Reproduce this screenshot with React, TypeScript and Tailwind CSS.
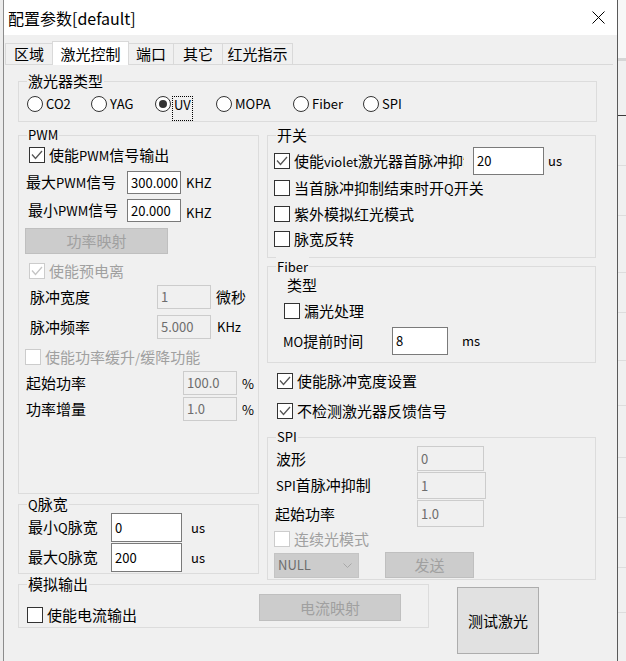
import React from 'react';

// Latin runs inside Chinese labels render a little smaller, like the UI font does
const Mixed = ({ text }: { text: string }) => (
  <>
    {text.split(/([\x20-\x7e]+)/).map((s, i) =>
      /[\x20-\x7e]/.test(s) ? (
        <span key={i} className="text-[13px]">
          {s}
        </span>
      ) : (
        <React.Fragment key={i}>{s}</React.Fragment>
      )
    )}
  </>
);

type CheckProps = { label: string; checked?: boolean; disabled?: boolean };

const Check = ({ label, checked, disabled }: CheckProps) => (
  <div className="flex items-center h-[16px]">
    <span
      className={`relative shrink-0 w-[16px] h-[16px] bg-white border ${
        disabled ? 'border-[#cccccc]' : 'border-[#333333]'
      }`}
    >
      {checked && (
        <svg viewBox="0 0 14 14" className="absolute inset-0 w-[14px] h-[14px]">
          <path
            d="M2 6.5 L5.5 10.5 L12 3"
            fill="none"
            stroke={disabled ? '#c4c4c4' : '#555555'}
            strokeWidth="1.3"
          />
        </svg>
      )}
    </span>
    <span
      className={`ml-[4px] text-[15px] leading-[18px] whitespace-nowrap ${
        disabled ? 'text-[#a0a0a0]' : 'text-black'
      }`}
    >
      <Mixed text={label} />
    </span>
  </div>
);

type RadioProps = { label: string; checked?: boolean; focus?: boolean; className?: string };

const Radio = ({ label, checked, focus, className }: RadioProps) => (
  <div className={`flex items-start ${className ?? ''}`}>
    <span className="shrink-0 w-[16px] h-[16px] rounded-full bg-white border border-[#333333] flex items-center justify-center">
      {checked && <span className="w-[8px] h-[8px] rounded-full bg-[#333333]" />}
    </span>
    {focus ? (
      <span className="ml-[1px] h-[25px] px-[1px] border border-dotted border-black text-[13px] leading-[15px] text-black">
        {label}
      </span>
    ) : (
      <span className="ml-[3px] text-[13px] leading-[16px] text-black">{label}</span>
    )}
  </div>
);

type FieldProps = { value: string; className: string; disabled?: boolean };

const Field = ({ value, className, disabled }: FieldProps) => (
  <div
    className={`shrink-0 flex items-center pl-[3px] border text-[13px] leading-[16px] ${
      disabled ? 'bg-[#f0f0f0] border-[#cccccc] text-[#6d6d6d]' : 'bg-white border-[#7a7a7a] text-black'
    } ${className}`}
  >
    {value}
  </div>
);

const DisabledButton = ({ label, className }: { label: string; className: string }) => (
  <div
    className={`shrink-0 flex items-center justify-center bg-[#cccccc] border border-[#bfbfbf] text-[15px] leading-[18px] text-[#a0a0a0] ${className}`}
  >
    {label}
  </div>
);

type GroupProps = { title: string; className: string; titleClass?: string; children?: React.ReactNode };

const Group = ({ title, className, titleClass, children }: GroupProps) => (
  <div className={`relative shrink-0 border border-[#dcdcdc] ${className}`}>
    <span
      className={`absolute left-[8px] top-[-10px] px-[1px] bg-[#f0f0f0] leading-[18px] text-black whitespace-nowrap ${
        titleClass ?? 'text-[15px]'
      }`}
    >
      <Mixed text={title} />
    </span>
    {children}
  </div>
);

const Label = ({ text, className }: { text: string; className: string }) => (
  <span className={`shrink-0 text-[15px] leading-[18px] text-black whitespace-nowrap ${className}`}>
    <Mixed text={text} />
  </span>
);

const Unit = ({ text, className }: { text: string; className: string }) => (
  <span className={`text-[13px] leading-[16px] text-black whitespace-nowrap ${className}`}>{text}</span>
);

const tabs = [
  { label: '区域', w: 'w-[48px]' },
  { label: '激光控制', w: 'w-[77px]', active: true },
  { label: '端口', w: 'w-[46px]' },
  { label: '其它', w: 'w-[50px]' },
  { label: '红光指示', w: 'w-[71px]' },
];

const App: React.FC = () => {
  return (
    <div className="w-[626px] h-[661px] flex overflow-hidden bg-[#f0f0f0] font-['Noto_Sans_CJK_SC','Microsoft_YaHei',sans-serif]">
      {/* background app, left edge */}
      <div className="w-[3px] h-full bg-[#ececec]" />

      {/* dialog window */}
      <div className="w-[615px] h-full flex flex-col border-l border-r border-l-[#8c8c8c] border-r-[#5a5a5a] bg-[#f0f0f0]">
        {/* title bar */}
        <div className="h-[35px] shrink-0 bg-white flex items-center justify-between pl-[4px] pr-[12px]">
          <span className="text-[16px] leading-[20px] text-black">配置参数[default]</span>
          <svg width="13" height="13" viewBox="0 0 13 13">
            <path d="M0.5 0.5 L12.5 12.5 M12.5 0.5 L0.5 12.5" stroke="#000" strokeWidth="1" />
          </svg>
        </div>

        {/* tabs */}
        <div className="mt-[6px] ml-[1px] h-[23px] flex items-end relative z-10">
          {tabs.map((t, i) => (
            <div
              key={t.label}
              className={`${t.w} ${i > 0 ? '-ml-px' : ''} flex items-center justify-center border border-b-0 border-[#d9d9d9] text-[15px] leading-[18px] text-black ${
                t.active ? 'h-[24px] -mb-px bg-white relative z-10' : 'h-[21px] bg-[#f0f0f0]'
              }`}
            >
              {t.label}
            </div>
          ))}
        </div>

        {/* tab panel */}
        <div className="ml-[1px] w-[608px] border-t border-[#d9d9d9] flex-1">
          <div className="pl-[13px] flex flex-col">
            {/* laser type */}
            <Group title="激光器类型" className="mt-[16px] w-[579px] h-[41px]">
              <div className="mt-[14px] pl-[8px] flex items-start">
                <Radio label="CO2" className="w-[64px]" />
                <Radio label="YAG" className="w-[64px]" />
                <Radio label="UV" checked focus className="w-[61px]" />
                <Radio label="MOPA" className="w-[77px]" />
                <Radio label="Fiber" className="w-[70px]" />
                <Radio label="SPI" />
              </div>
            </Group>

            {/* main two columns */}
            <div className="mt-[13px] flex items-start gap-[8px]">
              {/* left column */}
              <div className="w-[241px] flex flex-col">
                <Group title="PWM" titleClass="text-[13px]" className="w-[241px] h-[359px]">
                  <div className="flex flex-col">
                    <div className="mt-[11px] pl-[10px]">
                      <Check label="使能PWM信号输出" checked />
                    </div>
                    <div className="mt-[8px] pl-[7px] h-[23px] flex items-center">
                      <Label text="最大PWM信号" className="w-[101px]" />
                      <Field value="300.000" className="w-[54px] h-[23px]" />
                      <Unit text="KHZ" className="ml-[5px]" />
                    </div>
                    <div className="mt-[5px] pl-[9px] h-[23px] flex items-center">
                      <Label text="最小PWM信号" className="w-[99px]" />
                      <Field value="20.000" className="w-[54px] h-[23px]" />
                      <Unit text="KHZ" className="ml-[5px] pt-[4px]" />
                    </div>
                    <div className="mt-[6px] pl-[6px]">
                      <DisabledButton label="功率映射" className="w-[143px] h-[26px]" />
                    </div>
                    <div className="mt-[9px] pl-[10px]">
                      <Check label="使能预电离" checked disabled />
                    </div>
                    <div className="mt-[6px] pl-[11px] h-[24px] flex items-center">
                      <Label text="脉冲宽度" className="w-[127px]" />
                      <Field value="1" disabled className="w-[54px] h-[24px]" />
                      <Label text="微秒" className="ml-[5px]" />
                    </div>
                    <div className="mt-[6px] pl-[11px] h-[24px] flex items-center">
                      <Label text="脉冲频率" className="w-[127px]" />
                      <Field value="5.000" disabled className="w-[54px] h-[24px]" />
                      <Unit text="KHz" className="ml-[6px]" />
                    </div>
                    <div className="mt-[10px] pl-[6px]">
                      <Check label="使能功率缓升/缓降功能" disabled />
                    </div>
                    <div className="mt-[6px] pl-[7px] h-[24px] flex items-center">
                      <Label text="起始功率" className="w-[157px]" />
                      <Field value="100.0" disabled className="w-[54px] h-[24px]" />
                      <Unit text="%" className="ml-[5px] pt-[2px]" />
                    </div>
                    <div className="mt-[2px] pl-[7px] h-[24px] flex items-center">
                      <Label text="功率增量" className="w-[157px]" />
                      <Field value="1.0" disabled className="w-[54px] h-[24px]" />
                      <Unit text="%" className="ml-[5px] pt-[2px]" />
                    </div>
                  </div>
                </Group>

                <Group title="Q脉宽" className="mt-[10px] w-[241px] h-[70px]">
                  <div className="flex flex-col">
                    <div className="mt-[8px] pl-[9px] h-[29px] flex items-center">
                      <Label text="最小Q脉宽" className="w-[83px]" />
                      <Field value="0" className="w-[71px] h-[29px]" />
                      <Unit text="us" className="ml-[9px]" />
                    </div>
                    <div className="mt-[1px] pl-[9px] h-[29px] flex items-center">
                      <Label text="最大Q脉宽" className="w-[83px]" />
                      <Field value="200" className="w-[71px] h-[29px]" />
                      <Unit text="us" className="ml-[9px]" />
                    </div>
                  </div>
                </Group>
              </div>

              {/* right column */}
              <div className="w-[329px] flex flex-col">
                <Group title="开关" className="w-[329px] h-[123px]">
                  <div className="flex flex-col">
                    <div className="mt-[11px] pl-[6px] h-[28px] flex items-center">
                      <div className="w-[190px] overflow-hidden">
                        <Check label="使能violet激光器首脉冲抑制" checked />
                      </div>
                      <Field value="20" className="ml-[9px] w-[71px] h-[28px]" />
                      <Unit text="us" className="ml-[4px]" />
                    </div>
                    <div className="mt-[5px] pl-[6px]">
                      <Check label="当首脉冲抑制结束时开Q开关" />
                    </div>
                    <div className="mt-[10px] pl-[6px]">
                      <Check label="紫外模拟红光模式" />
                    </div>
                    <div className="mt-[9px] pl-[6px]">
                      <Check label="脉宽反转" />
                    </div>
                  </div>
                </Group>

                <Group title="Fiber" titleClass="text-[14px]" className="mt-[8px] w-[329px] h-[97px]">
                  <div className="flex flex-col">
                    <div className="mt-[8px] pl-[19px] h-[20px] flex items-center">
                      <Label text="类型" className="" />
                    </div>
                    <div className="mt-[8px] pl-[16px]">
                      <Check label="漏光处理" />
                    </div>
                    <div className="mt-[8px] pl-[15px] h-[28px] flex items-center">
                      <Label text="MO提前时间" className="w-[109px]" />
                      <Field value="8" className="w-[56px] h-[28px]" />
                      <Unit text="ms" className="ml-[14px]" />
                    </div>
                  </div>
                </Group>

                <div className="mt-[10px] pl-[10px]">
                  <Check label="使能脉冲宽度设置" checked />
                </div>
                <div className="mt-[14px] pl-[10px]">
                  <Check label="不检测激光器反馈信号" checked />
                </div>

                <Group title="SPI" titleClass="text-[12px]" className="mt-[18px] w-[329px] h-[143px]">
                  <div className="flex flex-col">
                    <div className="mt-[8px] pl-[8px] h-[25px] flex items-center">
                      <Label text="波形" className="w-[141px]" />
                      <Field value="0" disabled className="w-[67px] h-[25px]" />
                    </div>
                    <div className="mt-[1px] pl-[8px] h-[27px] flex items-center">
                      <Label text="SPI首脉冲抑制" className="w-[141px]" />
                      <Field value="1" disabled className="w-[69px] h-[27px]" />
                    </div>
                    <div className="mt-[1px] pl-[7px] h-[27px] flex items-center">
                      <Label text="起始功率" className="w-[142px]" />
                      <Field value="1.0" disabled className="w-[67px] h-[27px]" />
                    </div>
                    <div className="mt-[4px] pl-[6px]">
                      <Check label="连续光模式" disabled />
                    </div>
                    <div className="mt-[5px] pl-[6px] h-[26px] flex items-center">
                      <div className="w-[85px] h-[25px] flex items-center justify-between pl-[3px] pr-[6px] bg-[#cccccc] border border-[#c4c4c4]">
                        <span className="text-[13px] leading-[16px] text-[#6d6d6d]">NULL</span>
                        <svg width="9" height="5" viewBox="0 0 9 5">
                          <path d="M0.5 0.5 L4.5 4.5 L8.5 0.5" fill="none" stroke="#a8a8a8" strokeWidth="1" />
                        </svg>
                      </div>
                      <DisabledButton label="发送" className="ml-[26px] w-[89px] h-[26px]" />
                    </div>
                  </div>
                </Group>
              </div>
            </div>

            {/* bottom row */}
            <div className="mt-[4px] flex items-start">
              <Group title="模拟输出" className="w-[411px] h-[44px]">
                <div className="flex items-start pl-[8px]">
                  <div className="w-[232px] mt-[22px]">
                    <Check label="使能电流输出" />
                  </div>
                  <DisabledButton label="电流映射" className="mt-[9px] w-[142px] h-[27px]" />
                </div>
              </Group>
              <div className="ml-[28px] mt-[3px] w-[82px] h-[67px] flex items-center justify-center bg-[#e1e1e1] border border-[#adadad] text-[15px] leading-[18px] text-black">
                测试激光
              </div>
            </div>
          </div>
        </div>
      </div>

      {/* background app, right edge */}
      <div className="w-[8px] h-full flex flex-col bg-[#f0f0f0]">
        <div className="h-[61px] border-b-[3px] border-[#d6d6d6] bg-[#f7f7f7]" />
        <div className="h-[55px] border-b border-[#3c3c3c]" />
        <div className="h-[50px] border-b border-[#dddddd]" />
        <div className="h-[50px] border-b border-[#dddddd]" />
        <div className="h-[57px] border-b border-[#dddddd]" />
        <div className="h-[40px] border-b border-[#dddddd]" />
        <div className="h-[48px] border-b border-[#dddddd]" />
        <div className="h-[45px] border-b border-[#dddddd]" />
        <div className="h-[52px] border-b border-[#dddddd]" />
        <div className="h-[60px] border-b border-[#dddddd]" />
        <div className="h-[50px] border-b border-[#dddddd]" />
        <div className="h-[45px] border-b border-[#dddddd]" />
      </div>
    </div>
  );
};

export default App;
